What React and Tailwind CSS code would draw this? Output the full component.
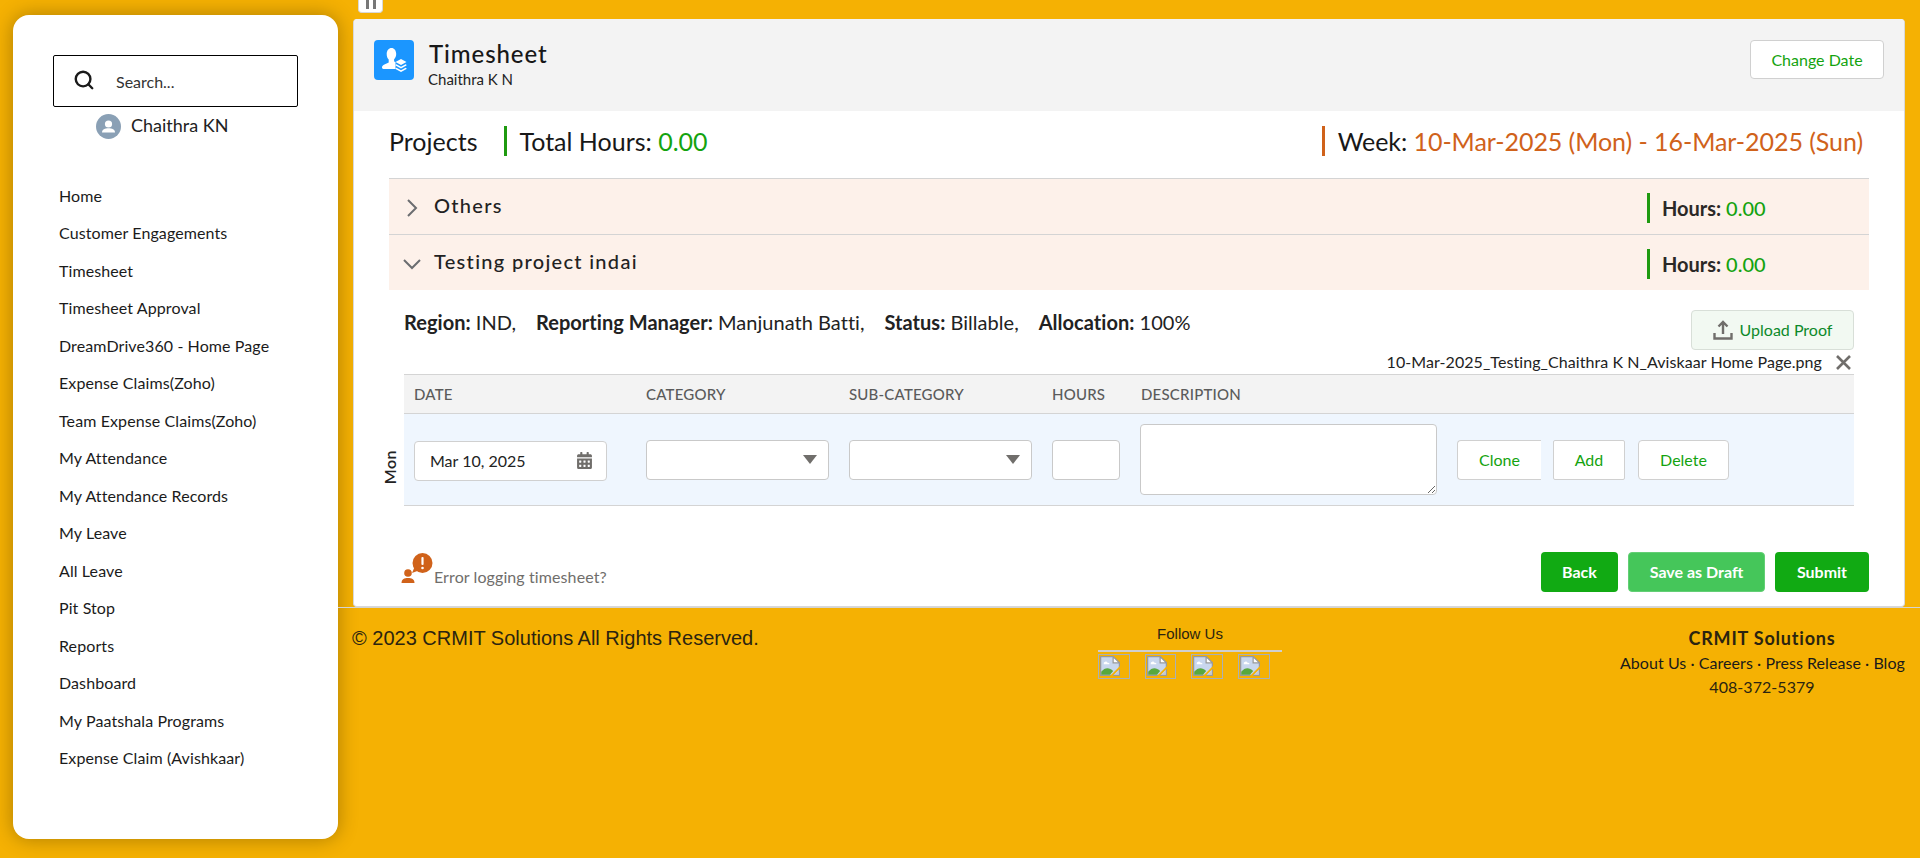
import React from "react";
import { Search } from "lucide-react";
import { FaCalendarAlt } from "react-icons/fa";

const navItems = [
  "Home",
  "Customer Engagements",
  "Timesheet",
  "Timesheet Approval",
  "DreamDrive360 - Home Page",
  "Expense Claims(Zoho)",
  "Team Expense Claims(Zoho)",
  "My Attendance",
  "My Attendance Records",
  "My Leave",
  "All Leave",
  "Pit Stop",
  "Reports",
  "Dashboard",
  "My Paatshala Programs",
  "Expense Claim (Avishkaar)",
];

const BrokenImage = () => (
  <svg width="20" height="20" viewBox="0 0 16 16" className="block">
    <path d="M0.5 0.5H10.5L15.5 5.5V15.5H0.500Z" fill="#c9d7ee" stroke="#9a9a9a" />
    <path d="M10.5 0.5V5.5H15.5Z" fill="#fff" stroke="#9a9a9a" />
    <path d="M3 6a1.5 1.2 0 0 1 3-.6a1.2 1 0 0 1 1.500 1.200H3Z" fill="#fff" />
    <path d="M1 15V12.5C4 9 7.500 9 10.500 12L8 15Z" fill="#58a83f" />
    <path d="M8 16L16 8V10L10 16Z" fill="#f5b103" />
    <path d="M12 15L15 12V15Z" fill="#c8c8c8" />
  </svg>
);

const AccordionRow = ({ title, open }) => (
  <div className="flex h-[56px] items-center border-t border-[#d4d4d4] bg-[#fdf1ea]">
    <div className="flex w-[45px] justify-center pt-[2px]">
      <svg width="20" height="20" viewBox="0 0 20 20" fill="none" stroke="#6b6d70" strokeWidth="2">
        {open ? <path d="M2 6L10 14L18 6" /> : <path d="M6 2L14 10L6 18" />}
      </svg>
    </div>
    <div className="mb-[3px] flex-1 text-[20px] font-medium tracking-[1.3px] text-[#222]">{title}</div>
    <div className="mr-[103px] mt-[3px] flex w-[119px] items-center">
      <div className="h-[30px] w-[3px] shrink-0 bg-[#1f9a10]"></div>
      <div className="ml-[12px] whitespace-nowrap text-[20px] font-bold text-[#2b2826]">
        Hours: <span className="font-medium text-[#14a30f]">0.00</span>
      </div>
    </div>
  </div>
);

const ColHead = ({ className, children }) => (
  <div className={`text-[15px] font-medium tracking-[0.2px] text-[#5b5b5b] ${className}`}>{children}</div>
);

const SelectBox = ({ width }) => (
  <div className={`flex h-[40px] items-center justify-end rounded-[4px] border border-[#c9c9c9] bg-white pr-[11px] ${width}`}>
    <div className="h-0 w-0 border-x-[7px] border-t-[9px] border-x-transparent border-t-[#706e6b]"></div>
  </div>
);

const App = () => {
  return (
    <div className="flex h-[858px] overflow-hidden bg-[#f5b103] font-['Lato',sans-serif] text-[#16161a]">

      {/* Sidebar */}
      <aside className="ml-[13px] mt-[15px] h-[824px] w-[325px] shrink-0 rounded-[16px] bg-white shadow-[0_0_20px_rgba(0,0,0,0.3)]">
        <div className="mx-[40px] mt-[40px] flex h-[52px] w-[245px] items-center rounded-[2px] border border-black">
          <Search size={22} strokeWidth={2.6} className="mb-[2px] ml-[19px] text-[#1a1a1a]" />
          <span className="ml-[21px] pt-[1px] text-[16px] text-[#333]">Search...</span>
        </div>
        <div className="ml-[83px] mt-[7px] flex h-[25px] items-center">
          <svg width="25" height="25" viewBox="0 0 25 25">
            <circle cx="12.5" cy="12.5" r="12.5" fill="#8aa0b5" />
            <circle cx="12.5" cy="10" r="3.6" fill="#fff" />
            <path d="M6 18.5c0-3 3-4.2 6.5-4.2s6.5 1.2 6.5 4.2Z" fill="#fff" />
          </svg>
          <span className="mb-[2px] ml-[10px] text-[18px] text-[#222]">Chaithra KN</span>
        </div>
        <nav className="ml-[46px] mt-[38px] flex flex-col">
          {navItems.map((item) => (
            <a key={item} className="flex h-[37.5px] items-center text-[16px] tracking-[0.1px] text-[#1b1b1b]">
              {item}
            </a>
          ))}
        </nav>
      </aside>

      {/* Main column */}
      <div className="relative ml-[15px] flex min-w-0 flex-1 flex-col pt-[19px]">
        {/* Pause tab */}
        <div className="absolute left-[5px] top-0 flex h-[13px] w-[25px] items-start justify-center gap-[4px] rounded-b-[4px] border border-t-0 border-[#d8d8d8] bg-white">
          <div className="h-[9px] w-[3px] bg-[#777]"></div>
          <div className="h-[9px] w-[3px] bg-[#777]"></div>
        </div>

        {/* Card */}
        <div className="mr-[15px] h-[588px] rounded-[4px] border-r border-b border-l border-[#d8d8d8] bg-white">
          {/* Card header */}
          <div className="flex h-[92px] items-start rounded-t-[4px] bg-[#f3f3f3] pl-[20px] pr-[20px] pt-[21px]">
            <div className="flex h-[40px] w-[40px] items-center justify-center rounded-[4px] bg-[#1b96ff]">
              <svg width="40" height="40" viewBox="0 0 40 40" fill="#fff">
                <path d="M17.500 8c2.700 0 4.700 2.600 4.700 6 0 2.300-.9 4.200-2.100 5.300v2.200l1.400.6V29H9.400C8.600 29 8 28.400 8 27.600c0-3 4.300-3.600 6.700-5v-3.200c-1.300-1.100-2-3-2-5.400C12.700 10.600 14.800 8 17.500 8Z" />
                <path d="M27 19l5.500 3L27 25l-5.500-3Z" />
                <path d="M22.400 24.300L27 26.800l4.600-2.500.9.500v.7L27 28.500l-5.500-3v-.7Z" />
                <path d="M22.400 27.800L27 30.300l4.600-2.500.9.500v.7L27 32l-5.500-3v-.7Z" />
              </svg>
            </div>
            <div className="ml-[15px] mt-[-2px]">
              <div className="text-[24px] font-medium leading-[32px] tracking-[0.9px] text-[#181818]">Timesheet</div>
              <div className="-ml-px text-[15px] leading-[18px] text-[#222]">Chaithra K N</div>
            </div>
            <button className="ml-auto h-[39px] w-[134px] rounded-[4px] border border-[#d0d0d0] bg-white pt-[1px] text-[16px] text-[#14a30f]">
              Change Date
            </button>
          </div>

          {/* Body */}
          <div className="pl-[35px] pr-[35px]">
            <div className="mt-[15px] flex h-[30px] items-center text-[25px] text-[#181818]">
              <span className="mt-[2px]">Projects</span>
              <div className="ml-[27px] h-[30px] w-[3px] bg-[#1f9a10]"></div>
              <span className="ml-[12px] mt-[2px]">Total Hours: <span className="text-[#14a30f]">0.00</span></span>
              <div className="ml-auto h-[30px] w-[3px] bg-[#d0621a]"></div>
              <span className="ml-[13px] mr-[6px] mt-[2px] tracking-[-0.06px]">
                Week: <span className="text-[#d0621a]">10-Mar-2025 (Mon) - 16-Mar-2025 (Sun)</span>
              </span>
            </div>

            <div className="mt-[22px]">
              <AccordionRow title="Others" />
              <AccordionRow title="Testing project indai" open />
            </div>

            {/* Expanded project */}
            <div className="px-[15px]">
              <div className="flex h-[60px] items-start pt-[20px]">
                <div className="mt-[-1px] text-[20px] leading-[26px] tracking-[0.03px] text-[#222]">
                  <b className="font-bold">Region:</b> IND,
                  <b className="ml-[20px] font-bold">Reporting Manager:</b> Manjunath Batti,
                  <b className="ml-[20px] font-bold">Status:</b> Billable,
                  <b className="ml-[20px] font-bold">Allocation:</b> 100%
                </div>
                <button className="ml-auto flex h-[40px] w-[163px] items-center justify-center rounded-[4px] border border-[#d8dfd8] bg-[#f2f9f2] text-[16px] text-[#0d8a2a]">
                  <svg width="20" height="20" viewBox="0 0 20 20" fill="none" stroke="#706e6b" strokeWidth="2.4" className="mr-[7px]">
                    <path d="M10 14V2.5M5.5 6.5L10 2l4.500 4.500" />
                    <path d="M1.500 13v5.500h17V13" />
                  </svg>
                  Upload Proof
                </button>
              </div>
              <div className="flex h-[24px] items-center justify-end text-[16px] tracking-[0.07px] text-[#222]">
                <span>10-Mar-2025_Testing_Chaithra K N_Aviskaar Home Page.png</span>
                <svg width="15" height="15" viewBox="0 0 15 15" stroke="#706e6b" strokeWidth="2.6" className="ml-[14px] mr-[3px]">
                  <path d="M1 1L14 14M14 1L1 14" />
                </svg>
              </div>

              {/* Table */}
              <div className="flex h-[39px] items-center border-t border-[#d4d4d4] bg-[#f3f3f3] pl-[10px]">
                <ColHead className="w-[232px]">DATE</ColHead>
                <ColHead className="w-[203px]">CATEGORY</ColHead>
                <ColHead className="w-[203px]">SUB-CATEGORY</ColHead>
                <ColHead className="w-[89px]">HOURS</ColHead>
                <ColHead>DESCRIPTION</ColHead>
              </div>
              <div className="relative flex h-[93px] items-center border-y border-[#d4d4d4] bg-[#eff6fe] pl-[10px]">
                <div className="absolute left-[-26px] top-[36px] rotate-180 text-[16px] font-semibold tracking-[0.5px] text-[#222] [writing-mode:vertical-rl]">
                  Mon
                </div>
                <div className="mr-[39px] mt-[2px] flex h-[40px] w-[193px] items-center justify-between rounded-[4px] border border-[#d0d0d0] bg-white pl-[15px] pr-[13px] text-[16px] text-[#222]">
                  Mar 10, 2025
                  <FaCalendarAlt size={17} className="text-[#706e6b]" />
                </div>
                <SelectBox width="w-[183px] mr-[20px]" />
                <SelectBox width="w-[183px] mr-[20px]" />
                <div className="mr-[20px] h-[40px] w-[68px] rounded-[4px] border border-[#c9c9c9] bg-white"></div>
                <textarea className="h-[71px] w-[297px] rounded-[4px] border border-[#c9c9c9] bg-white outline-none"></textarea>
                <button className="ml-[20px] h-[40px] w-[84px] rounded-l-[4px] border-y border-l border-[#d0d0d0] bg-white text-[16px] text-[#14a30f]">Clone</button>
                <button className="ml-[12px] h-[40px] w-[72px] rounded-[2px] border border-[#d0d0d0] bg-white text-[16px] text-[#14a30f]">Add</button>
                <button className="ml-[13px] h-[40px] w-[91px] rounded-[4px] border border-[#d0d0d0] bg-white text-[16px] text-[#14a30f]">Delete</button>
              </div>
            </div>

            {/* Bottom actions */}
            <div className="mt-[46px] flex h-[40px] items-start">
              <div className="relative ml-[10px] mt-[13px] flex items-center">
                <svg width="33" height="30" viewBox="0 0 33 30" className="absolute left-[2px] top-[-12px]">
                  <circle cx="21.500" cy="10" r="10" fill="#d0621a" />
                  <path d="M14 13l-3 7 8-3Z" fill="#d0621a" />
                  <rect x="20.400" y="4" width="2.200" height="8" rx="1" fill="#fff" />
                  <circle cx="21.500" cy="15" r="1.300" fill="#fff" />
                  <circle cx="7" cy="20" r="3.800" fill="#d0621a" />
                  <path d="M0.500 30c0-4 3-5 6.500-5s6.500 1 6.500 5Z" fill="#d0621a" />
                </svg>
                <span className="ml-[35px] text-[16px] leading-[24px] tracking-[0.1px] text-[#706e6b]">Error logging timesheet?</span>
              </div>
              <button className="ml-auto h-[40px] w-[77px] rounded-[4px] bg-[#11aa13] text-[16px] font-bold text-white">Back</button>
              <button className="ml-[10px] h-[40px] w-[137px] rounded-[4px] border border-[#63cf75] bg-[#45c65a] text-[16px] font-bold text-white">Save as Draft</button>
              <button className="ml-[10px] h-[40px] w-[94px] rounded-[4px] bg-[#11aa13] text-[16px] font-bold text-white">Submit</button>
            </div>
          </div>
        </div>

        {/* Footer */}
        <footer className="-ml-[15px] flex flex-1 items-start border-t border-[#d4d4d4] pl-[14px]">
          <div className="mt-[16px] w-[746px] font-['Liberation_Sans',sans-serif] text-[20px] leading-[28px] text-[#2b2410]">
            © 2023 CRMIT Solutions All Rights Reserved.
          </div>
          <div className="mt-[16px] w-[184px]">
            <div className="text-center font-['Liberation_Sans',sans-serif] text-[15px] leading-[20px] text-[#2b2410]">Follow Us</div>
            <div className="mt-[6px] h-[2px] bg-[#cfcfcf]"></div>
            <div className="mt-[2px] flex">
              {[0, 1, 2, 3].map((n) => (
                <div key={n} className="mr-[15px] flex h-[25px] w-[31.67px] shrink-0 items-start border border-[#aab0b5] p-[1px]">
                  <BrokenImage />
                </div>
              ))}
            </div>
          </div>
          <div className="ml-[338px] mt-[18px] w-[284px] whitespace-nowrap text-center text-[16px] leading-[24.5px] tracking-[0.05px] text-[#1a1a1a]">
            <div className="text-[18px] font-bold tracking-[0.8px] text-[#2b2410]">CRMIT Solutions</div>
            <div>About Us · Careers · Press Release · Blog</div>
            <div className="text-[#2b2410]">408-372-5379</div>
          </div>
        </footer>
      </div>
    </div>
  );
};

export default App;
